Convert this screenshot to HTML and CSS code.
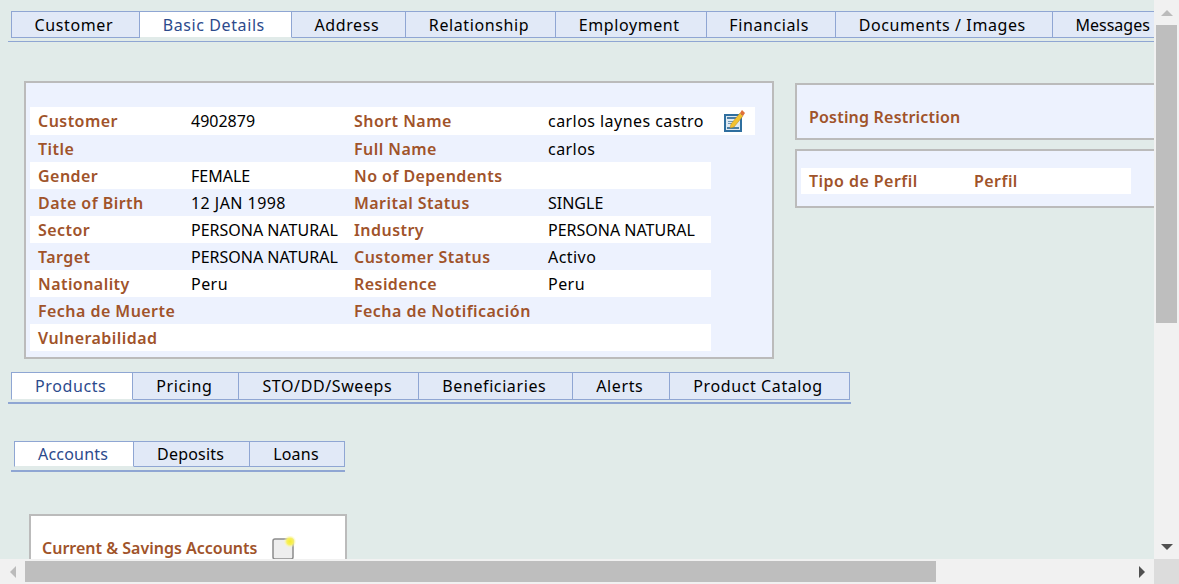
FILE: index.html
```html
<!DOCTYPE html>
<html lang="en">
<head>
    <meta charset="UTF-8">
    <title>Customer - Basic Details</title>
    <link rel="stylesheet" href="styles.css">
</head>
<body>
    <div class="window">
        <div class="content">
            <div class="page">
                <div class="tabs tabs-main">
                    <a class="tab">Customer</a>
                    <a class="tab active">Basic Details</a>
                    <a class="tab">Address</a>
                    <a class="tab">Relationship</a>
                    <a class="tab">Employment</a>
                    <a class="tab">Financials</a>
                    <a class="tab">Documents / Images</a>
                    <a class="tab">Messages</a>
                </div>

                <div class="details">
                    <div class="panel panel-main">
                        <table class="grid">
                            <tr>
                                <td class="label c1">Customer</td><td class="c2 caps">4902879</td>
                                <td class="label c3">Short Name</td><td class="c4">carlos laynes castro</td>
                                <td class="c5">
                                    <svg class="icon-edit" width="22" height="24" viewBox="0 0 22 24">
                                        <rect x="2" y="6" width="16" height="16" fill="#dfeaf2" stroke="#2f6f9f" stroke-width="2"/>
                                        <rect x="4" y="8" width="12" height="2" fill="#4a7ea5"/>
                                        <rect x="5" y="12" width="6" height="1" fill="#6f97b5"/>
                                        <rect x="5" y="14" width="5" height="1" fill="#6f97b5"/>
                                        <rect x="4" y="18" width="12" height="2" fill="#4a7ea5"/>
                                        <path d="M8 15l-1 4 4-1L20 7l-3-3z" fill="#f2c230" stroke="#b9861c" stroke-width=".5"/>
                                        <path d="M17 4l2-3 3 3-2 3z" fill="#e0703a"/>
                                    </svg>
                                </td>
                            </tr>
                            <tr><td class="label">Title</td><td></td><td class="label">Full Name</td><td>carlos</td></tr>
                            <tr><td class="label">Gender</td><td class="caps">FEMALE</td><td class="label">No of Dependents</td><td></td></tr>
                            <tr><td class="label">Date of Birth</td><td>12 JAN 1998</td><td class="label">Marital Status</td><td class="caps">SINGLE</td></tr>
                            <tr><td class="label">Sector</td><td class="caps">PERSONA NATURAL</td><td class="label">Industry</td><td class="caps">PERSONA NATURAL</td></tr>
                            <tr><td class="label">Target</td><td class="caps">PERSONA NATURAL</td><td class="label">Customer Status</td><td>Activo</td></tr>
                            <tr><td class="label">Nationality</td><td>Peru</td><td class="label">Residence</td><td>Peru</td></tr>
                            <tr><td class="label">Fecha de Muerte</td><td></td><td class="label">Fecha de Notificación</td><td></td></tr>
                            <tr><td class="label">Vulnerabilidad</td><td></td><td></td><td></td></tr>
                        </table>
                    </div>

                    <div class="side">
                        <div class="panel panel-posting">
                            <span class="label">Posting Restriction</span>
                        </div>
                        <div class="panel panel-profile">
                            <div class="profile-row">
                                <span class="label profile-type">Tipo de Perfil</span>
                                <span class="label">Perfil</span>
                            </div>
                        </div>
                    </div>
                </div>

                <div class="tabs tabs-products">
                    <a class="tab active">Products</a>
                    <a class="tab">Pricing</a>
                    <a class="tab">STO/DD/Sweeps</a>
                    <a class="tab">Beneficiaries</a>
                    <a class="tab">Alerts</a>
                    <a class="tab">Product Catalog</a>
                </div>

                <div class="tabs tabs-accounts">
                    <a class="tab active">Accounts</a>
                    <a class="tab">Deposits</a>
                    <a class="tab">Loans</a>
                </div>

                <div class="card">
                    <span class="label">Current &amp; Savings Accounts</span>
                    <svg class="icon-new" width="24" height="24" viewBox="0 0 24 24">
                        <defs>
                            <radialGradient id="glow">
                                <stop offset="0" stop-color="#f4ec30"/>
                                <stop offset=".5" stop-color="#f8f060"/>
                                <stop offset="1" stop-color="#fdfbd0" stop-opacity="0"/>
                            </radialGradient>
                        </defs>
                        <rect x="1" y="3" width="20" height="20" rx="2" fill="#eeeeee" stroke="#8c8c8c" stroke-width="1.500"/>
                        <circle cx="18" cy="5.500" r="6.500" fill="url(#glow)"/>
                    </svg>
                </div>
            </div>
        </div>

        <div class="vbar">
            <span class="step"><span class="arrow arrow-up"></span></span>
            <div class="vtrack"><div class="vthumb"></div></div>
            <span class="step"><span class="arrow arrow-down"></span></span>
        </div>
        <div class="hbar">
            <span class="step"><span class="arrow arrow-left"></span></span>
            <div class="htrack"><div class="hthumb"></div></div>
            <span class="step"><span class="arrow arrow-right"></span></span>
        </div>
        <div class="corner"></div>
    </div>
</body>
</html>
```

FILE: styles.css
```css
html, body {
    margin: 0;
    padding: 0;
    height: 100%;
    overflow: hidden;
}
body {
    font-family: "Noto Sans", "DejaVu Sans", sans-serif;
    font-size: 16px;
    letter-spacing: 0.45px;
    color: #000;
}
.window {
    display: grid;
    grid-template-columns: 1154px 25px;
    grid-template-rows: 559px 25px;
    width: 1179px;
    height: 584px;
}
.content {
    background-color: #e1ebe9;
    overflow: hidden;
}
.page {
    width: 1400px;
    padding: 11px 0 0 8px;
}

/* tabs */
.tabs {
    display: flex;
    border-bottom: 1px solid #8fa6d3;
    padding-left: 3px;
}
.tab {
    display: block;
    box-sizing: border-box;
    padding: 0 26px 0 22.600px;
    height: 27px;
    line-height: 26px;
    letter-spacing: 0.6px;
    white-space: nowrap;
    background-color: #e1e9f7;
    border: 1px solid #8fa6d3;
    border-left-width: 0;
}
.tab:first-child {
    border-left-width: 1px;
}
.tab.active {
    background-color: #fff;
    color: #2c4a8c;
    border-bottom-color: #e1ebe9;
}
.tabs-main {
    padding-bottom: 3px;
}
.tabs-main .tab:last-child {
    letter-spacing: 0;
}
.tabs-products {
    width: 840px;
    margin-top: 13px;
    padding-bottom: 2px;
    border-bottom-width: 2px;
}
.tabs-products .tab {
    height: 28px;
    padding: 0 26px 0 23px;
    line-height: 27px;
}
.tabs-accounts {
    width: 331px;
    margin: 37px 0 0 3px;
    padding-bottom: 3px;
    border-bottom-width: 2px;
}
.tabs-accounts .tab {
    height: 26px;
    line-height: 25px;
    letter-spacing: 0.2px;
    padding: 0 25px 0 23px;
}

/* panels */
.details {
    display: flex;
    align-items: flex-start;
    margin: 39px 0 0 16px;
}
.panel {
    box-sizing: border-box;
    background-color: #edf2fe;
    border: 2px solid #bbb;
}
.panel-main {
    width: 750px;
    height: 278px;
    padding: 24px 0 0 4px;
}
.label {
    color: #a0532a;
    font-weight: 600;
}
.caps {
    letter-spacing: 0;
}
.grid {
    border-collapse: collapse;
    table-layout: fixed;
}
.grid td {
    padding: 0 0 0 8px;
    height: 27px;
    white-space: nowrap;
}
.grid tr:nth-child(odd) td {
    background-color: #fff;
}
.grid tr:first-child td {
    height: 28px;
}
.c1 { width: 145px; }
.c2 { width: 155px; }
.c3 { width: 186px; }
.c4 { width: 163px; }
.c5 { width: 36px; }
.icon-edit {
    display: block;
    margin-left: 4px;
}
.side {
    margin: 2px 0 0 21px;
    width: 500px;
}
.panel-posting {
    height: 57px;
    padding: 21px 0 0 12px;
    letter-spacing: 0.2px;
}
.panel-profile {
    height: 59px;
    margin-top: 9px;
    padding-top: 17px;
    padding-left: 4px;
}
.profile-row {
    display: flex;
    align-items: center;
    width: 322px;
    height: 26px;
    padding-left: 8px;
    background-color: #fff;
}
.profile-type {
    width: 165px;
}
.card {
    display: flex;
    align-items: center;
    box-sizing: border-box;
    width: 318px;
    height: 70px;
    margin: 42px 0 0 21px;
    padding: 0 0 2px 11px;
    letter-spacing: 0;
    background-color: #fff;
    border: 2px solid #bbb;
}
.icon-new {
    margin: 0 0 0 15px;
}

/* fake browser scrollbars */
.vbar, .hbar {
    display: flex;
    align-items: center;
    background-color: #f1f1f1;
}
.vbar {
    flex-direction: column;
}
.step {
    display: flex;
    flex: none;
    align-items: center;
    justify-content: center;
    width: 25px;
    height: 25px;
}
.vtrack, .htrack {
    flex: 1;
}
.vtrack {
    width: 21px;
}
.vthumb {
    width: 21px;
    height: 298px;
    background-color: #bebebe;
}
.htrack {
    height: 21px;
}
.hthumb {
    width: 911px;
    height: 21px;
    background-color: #bebebe;
}
.corner {
    background-color: #dcdcdc;
}
.arrow {
    display: block;
    width: 0;
    height: 0;
    border: 6px solid transparent;
}
.arrow-up {
    border-top-width: 0;
    border-bottom-color: #bbb;
}
.arrow-down {
    border-bottom-width: 0;
    border-top-color: #505050;
}
.arrow-left {
    border-left-width: 0;
    border-right-color: #bbb;
}
.arrow-right {
    border-right-width: 0;
    border-left-color: #505050;
}
```
